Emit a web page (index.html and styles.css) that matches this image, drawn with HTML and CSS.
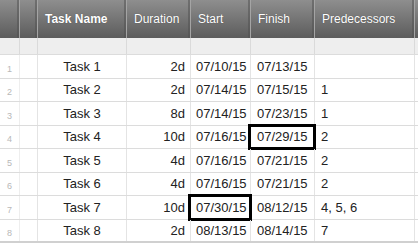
FILE: index.html
```html
<!DOCTYPE html>
<html>
<head>
<meta charset="utf-8">
<link rel="stylesheet" href="styles.css">
</head>
<body>
<div class="sheet">
  <div class="row head">
    <div class="c"></div>
    <div class="c"></div>
    <div class="c bold">Task Name</div>
    <div class="c">Duration</div>
    <div class="c">Start</div>
    <div class="c">Finish</div>
    <div class="c">Predecessors</div>
    <div class="c"></div>
  </div>
  <div class="row blank">
    <div class="c"></div><div class="c"></div><div class="c"></div><div class="c"></div>
    <div class="c"></div><div class="c"></div><div class="c"></div><div class="c"></div>
  </div>
  <div class="row body">
    <div class="c num">1</div><div class="c"></div><div class="c name">Task 1</div><div class="c dur">2d</div>
    <div class="c">07/10/15</div><div class="c">07/13/15</div><div class="c"></div><div class="c"></div>
  </div>
  <div class="row body">
    <div class="c num">2</div><div class="c"></div><div class="c name">Task 2</div><div class="c dur">2d</div>
    <div class="c">07/14/15</div><div class="c">07/15/15</div><div class="c">1</div><div class="c"></div>
  </div>
  <div class="row body">
    <div class="c num">3</div><div class="c"></div><div class="c name">Task 3</div><div class="c dur">8d</div>
    <div class="c">07/14/15</div><div class="c">07/23/15</div><div class="c">1</div><div class="c"></div>
  </div>
  <div class="row body">
    <div class="c num">4</div><div class="c"></div><div class="c name">Task 4</div><div class="c dur">10d</div>
    <div class="c">07/16/15</div><div class="c sel">07/29/15</div><div class="c">2</div><div class="c"></div>
  </div>
  <div class="row body">
    <div class="c num">5</div><div class="c"></div><div class="c name">Task 5</div><div class="c dur">4d</div>
    <div class="c">07/16/15</div><div class="c">07/21/15</div><div class="c">2</div><div class="c"></div>
  </div>
  <div class="row body">
    <div class="c num">6</div><div class="c"></div><div class="c name">Task 6</div><div class="c dur">4d</div>
    <div class="c">07/16/15</div><div class="c">07/21/15</div><div class="c">2</div><div class="c"></div>
  </div>
  <div class="row body">
    <div class="c num">7</div><div class="c"></div><div class="c name">Task 7</div><div class="c dur">10d</div>
    <div class="c sel">07/30/15</div><div class="c">08/12/15</div><div class="c">4, 5, 6</div><div class="c"></div>
  </div>
  <div class="row body last">
    <div class="c num">8</div><div class="c"></div><div class="c name">Task 8</div><div class="c dur">2d</div>
    <div class="c">08/13/15</div><div class="c">08/14/15</div><div class="c">7</div><div class="c"></div>
  </div>
</div>
</body>
</html>
```
FILE: styles.css
```css
* { box-sizing: border-box; }
html, body { margin: 0; padding: 0; background: #ffffff; }
body {
  font-family: "Liberation Sans", Arial, sans-serif;
  width: 418px;
  height: 245px;
  overflow: hidden;
}
.sheet { display: flex; flex-direction: column; }
.row {
  display: grid;
  grid-template-columns: 20px 18px 89px 64px 60px 64px 100px 3px;
}
.c {
  border-right: 1px solid #e4e4e4;
  display: flex;
  align-items: center;
  padding: 0 6px;
  white-space: nowrap;
  position: relative;
}
.head {
  height: 38px;
  background: linear-gradient(#8e8e8e, #5c5c5c);
  color: #ffffff;
  font-size: 12px;
  text-shadow: 0 0 1px rgba(0,0,0,0.4);
}
.head .c {
  border-right: 1px solid #a4a4a4;
  box-shadow: inset -2px 0 0 rgba(80,80,80,0.5);
  padding: 0 7px;
}
.head .bold { font-weight: bold; }
.blank {
  height: 17px;
  background: #eeeeee;
  border-bottom: 1px solid #dcdcdc;
}
.blank .c { border-right: 1px solid #dadada; }
.body {
  height: 23.5px;
  border-bottom: 1px solid #dcdcdc;
  font-size: 13px;
  color: #222222;
}
.body.last { border-bottom: 2px solid #d0d0d0; }
.body .c:first-child { border-right: 1px solid #eeeeee; }
.num {
  justify-content: center;
  font-size: 9px;
  color: #b8b8b8;
  padding: 5px 0 0;
}
.name { justify-content: center; }
.dur { justify-content: flex-end; padding-right: 5px; }
.body .c:nth-child(5) { padding-left: 5px; }
.sel::after {
  content: "";
  position: absolute;
  left: -3px;
  right: -2px;
  top: -2px;
  bottom: -2px;
  border: 3px solid #000000;
}
```
